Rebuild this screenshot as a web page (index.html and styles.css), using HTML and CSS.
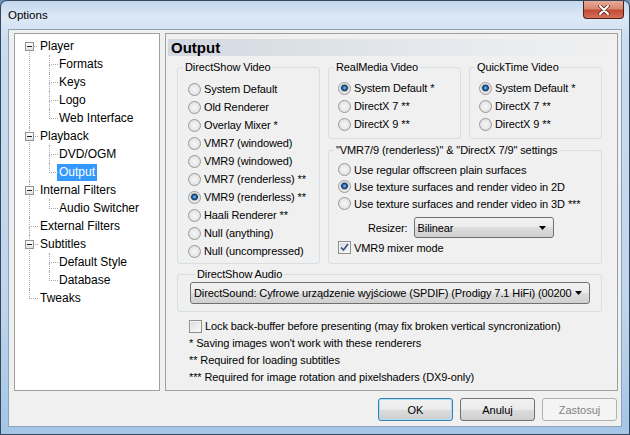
FILE: index.html
```html
<!DOCTYPE html>
<html lang="en">
<head>
    <meta charset="UTF-8">
    <title>Options</title>
    <link rel="stylesheet" href="styles.css">
</head>
<body>
    <div class="window">
        <div class="titlebar">
            <span class="title">Options</span>
            <div class="close">
                <svg width="12" height="10" viewBox="0 0 12 10">
                    <path d="M2 1 L10 9 M10 1 L2 9" stroke="#5a2a22" stroke-width="3.6" stroke-linecap="round"/>
                    <path d="M2 1 L10 9 M10 1 L2 9" stroke="#fff" stroke-width="2" stroke-linecap="round"/>
                </svg>
            </div>
        </div>
        <div class="client">
            <div class="main">
                <div class="tree">
                    <ul class="nodes">
                        <li><div class="row"><span class="exp"></span><span class="label">Player</span></div>
                            <ul>
                                <li><div class="row"><span class="label">Formats</span></div></li>
                                <li><div class="row"><span class="label">Keys</span></div></li>
                                <li><div class="row"><span class="label">Logo</span></div></li>
                                <li><div class="row"><span class="label">Web Interface</span></div></li>
                            </ul>
                        </li>
                        <li><div class="row"><span class="exp"></span><span class="label">Playback</span></div>
                            <ul>
                                <li><div class="row"><span class="label">DVD/OGM</span></div></li>
                                <li><div class="row"><span class="label sel">Output</span></div></li>
                            </ul>
                        </li>
                        <li><div class="row"><span class="exp"></span><span class="label">Internal Filters</span></div>
                            <ul>
                                <li><div class="row"><span class="label">Audio Switcher</span></div></li>
                            </ul>
                        </li>
                        <li><div class="row"><span class="label">External Filters</span></div></li>
                        <li><div class="row"><span class="exp"></span><span class="label">Subtitles</span></div>
                            <ul>
                                <li><div class="row"><span class="label">Default Style</span></div></li>
                                <li><div class="row"><span class="label">Database</span></div></li>
                            </ul>
                        </li>
                        <li><div class="row"><span class="label">Tweaks</span></div></li>
                    </ul>
                </div>

                <div class="panel">
                    <div class="header">Output</div>
                    <div class="content">
                        <div class="columns">
                            <fieldset class="group video">
                                <legend>DirectShow Video</legend>
                                <div class="items">
                                    <div class="opt"><span class="radio"></span>System Default</div>
                                    <div class="opt"><span class="radio"></span>Old Renderer</div>
                                    <div class="opt"><span class="radio"></span>Overlay Mixer *</div>
                                    <div class="opt"><span class="radio"></span>VMR7 (windowed)</div>
                                    <div class="opt"><span class="radio"></span>VMR9 (windowed)</div>
                                    <div class="opt"><span class="radio"></span>VMR7 (renderless) **</div>
                                    <div class="opt"><span class="radio on"></span>VMR9 (renderless) **</div>
                                    <div class="opt"><span class="radio"></span>Haali Renderer **</div>
                                    <div class="opt"><span class="radio"></span>Null (anything)</div>
                                    <div class="opt"><span class="radio"></span>Null (uncompressed)</div>
                                </div>
                            </fieldset>

                            <div class="right-col">
                                <div class="pair">
                                    <fieldset class="group small">
                                        <legend>RealMedia Video</legend>
                                        <div class="items">
                                            <div class="opt"><span class="radio on"></span>System Default *</div>
                                            <div class="opt"><span class="radio"></span>DirectX 7 **</div>
                                            <div class="opt"><span class="radio"></span>DirectX 9 **</div>
                                        </div>
                                    </fieldset>
                                    <fieldset class="group small">
                                        <legend>QuickTime Video</legend>
                                        <div class="items">
                                            <div class="opt"><span class="radio on"></span>System Default *</div>
                                            <div class="opt"><span class="radio"></span>DirectX 7 **</div>
                                            <div class="opt"><span class="radio"></span>DirectX 9 **</div>
                                        </div>
                                    </fieldset>
                                </div>
                                <fieldset class="group vmr">
                                    <legend>"VMR7/9 (renderless)" &amp; "DirectX 7/9" settings</legend>
                                    <div class="items">
                                        <div class="opt"><span class="radio"></span>Use regular offscreen plain surfaces</div>
                                        <div class="opt"><span class="radio on"></span>Use texture surfaces and render video in 2D</div>
                                        <div class="opt"><span class="radio"></span>Use texture surfaces and render video in 3D ***</div>
                                        <div class="resizer">
                                            <span>Resizer:</span>
                                            <div class="combo short">
                                                <span class="value">Bilinear</span>
                                                <svg width="7" height="4" viewBox="0 0 7 4"><polygon points="0,0 7,0 3.5,4" fill="#000"/></svg>
                                            </div>
                                        </div>
                                        <div class="opt check-row"><span class="check on"><svg width="11" height="11" viewBox="0 0 11 11"><path d="M2 5.5 L4.5 8 L9 2" fill="none" stroke="#3d4f8c" stroke-width="1.7"/></svg></span>VMR9 mixer mode</div>
                                    </div>
                                </fieldset>
                            </div>
                        </div>

                        <fieldset class="group audio">
                            <legend>DirectShow Audio</legend>
                            <div class="combo wide">
                                <span class="value">DirectSound: Cyfrowe urządzenie wyjściowe (SPDIF) (Prodigy 7.1 HiFi) (00200</span>
                                <svg width="7" height="4" viewBox="0 0 7 4"><polygon points="0,0 7,0 3.5,4" fill="#000"/></svg>
                            </div>
                        </fieldset>

                        <div class="notes">
                            <div class="opt"><span class="check"></span>Lock back-buffer before presenting (may fix broken vertical syncronization)</div>
                            <div class="note">* Saving images won't work with these renderers</div>
                            <div class="note">** Required for loading subtitles</div>
                            <div class="note">*** Required for image rotation and pixelshaders (DX9-only)</div>
                        </div>
                    </div>
                </div>
            </div>

            <div class="buttons">
                <div class="btn default">OK</div>
                <div class="btn">Anuluj</div>
                <div class="btn disabled">Zastosuj</div>
            </div>
        </div>
    </div>
</body>
</html>
```

FILE: styles.css
```css
body {
    margin: 0;
    width: 630px;
    height: 435px;
    overflow: hidden;
    font-family: "Liberation Sans", Arial, sans-serif;
    font-size: 12px;
    color: #000;
    background: #6b8fb5;
}

.window {
    width: 630px;
    height: 435px;
    box-sizing: border-box;
    border: 1px solid #34475c;
    border-radius: 7px 7px 0 0;
    background: linear-gradient(to bottom, #c3d7ec 0, #dde9f6 16px, #cadcef 40px, #bfd5eb 70%, #a4c5e6 100%);
}

.titlebar {
    height: 28px;
    display: flex;
    align-items: center;
    padding-left: 7px;
}

.title {
    font-size: 11.5px;
    color: #000;
}

.close {
    align-self: flex-start;
    margin-left: auto;
    margin-right: 5px;
    width: 41px;
    height: 18px;
    box-sizing: border-box;
    border: 1px solid #4d221b;
    border-top: none;
    border-radius: 0 0 4px 4px;
    background: linear-gradient(to bottom, #e8aa9a 0, #d98770 45%, #c34b33 55%, #d4705a 100%);
    display: flex;
    justify-content: center;
    align-items: center;
}

.client {
    margin: 0 7px;
    height: 398px;
    box-sizing: border-box;
    border: 1px solid #8ca2b9;
    background: #f0f0f0;
}

.main {
    display: flex;
    margin: 3px 0 0 5px;
}

/* tree */

.tree {
    width: 146px;
    height: 358px;
    box-sizing: border-box;
    border: 1px solid #a0a0a0;
    background: #fff;
}

.nodes,
.nodes ul {
    list-style: none;
    margin: 0;
    padding: 0;
}

.nodes {
    padding: 3px 0 0 14px;
}

.nodes ul {
    padding-left: 20px;
}

.nodes li {
    position: relative;
}

.nodes li::before {
    content: '';
    position: absolute;
    left: 0;
    top: 0;
    width: 8px;
    height: 9px;
    border-left: 1px dotted #a8a8a8;
    border-bottom: 1px dotted #a8a8a8;
}

.nodes li::after {
    content: '';
    position: absolute;
    left: 0;
    top: 10px;
    bottom: 0;
    border-left: 1px dotted #a8a8a8;
}

.nodes li:last-child::after {
    display: none;
}

.nodes > li:first-child::before {
    border-left: none;
}

.row {
    height: 18px;
    display: flex;
    align-items: center;
    white-space: nowrap;
}

.nodes > li > .row {
    padding-left: 9px;
}

.nodes ul .row {
    padding-left: 8px;
}

.label {
    padding: 0 2px;
    line-height: 17px;
}

.label.sel {
    background: #3399ff;
    color: #fff;
}

.exp {
    position: absolute;
    left: -4px;
    top: 5px;
    width: 9px;
    height: 9px;
    box-sizing: border-box;
    border: 1px solid #919191;
    background: linear-gradient(#222, #222) center / 5px 1px no-repeat, linear-gradient(#fff, #e2e2e2);
    z-index: 1;
}

/* right panel */

.panel {
    width: 453px;
    height: 358px;
    box-sizing: border-box;
    border: 1px solid #a0a0a0;
    padding: 5px 1px 0;
    margin-left: 5px;
}

.header {
    height: 17px;
    margin: 0 1px;
    padding-left: 3px;
    font-size: 15px;
    font-weight: bold;
    line-height: 17px;
    background: linear-gradient(to right, #d2d8e0 0, #e4e8ed 55%, #f0f0f0 100%);
}

.content {
    padding: 0 14px 0 10px;
    font-size: 11px;
    letter-spacing: -0.1px;
}

.columns {
    display: flex;
    gap: 8px;
    margin-top: 3px;
}

.group {
    margin: 0;
    padding: 0;
    min-width: 0;
    border: 1px solid #d5dfe5;
    border-radius: 3px;
    box-sizing: border-box;
}

.group legend {
    margin-left: 5px;
    padding: 0 2px;
    line-height: 16px;
}

.video {
    width: 143px;
}

.video .items {
    padding: 5px 0 3px 10px;
}

.right-col {
    width: 274px;
    display: flex;
    flex-direction: column;
}

.pair {
    display: flex;
    gap: 8px;
}

.small {
    width: 133px;
}

.small .items {
    padding: 4px 0 5px 9px;
}

.opt {
    height: 18px;
    display: flex;
    align-items: center;
    white-space: nowrap;
}

.vmr {
    flex: 1;
    margin-top: 3px;
}

.vmr .items {
    padding: 3px 0 0 9px;
}

.vmr .opt {
    height: 17px;
}

.radio {
    width: 13px;
    height: 13px;
    box-sizing: border-box;
    border: 1px solid #9a9a9a;
    border-radius: 50%;
    margin-right: 3px;
    flex-shrink: 0;
    background: radial-gradient(circle at 50% 50%, #f6f6f6 0, #e8e8e8 55%, #cdcdcd 100%);
}

.radio.on {
    background: radial-gradient(circle at 50% 45%, #9fd2f5 0, #2f73b5 1.5px, #0f3563 3px, #b8b8b8 3.6px, #ececec 4.6px, #d2d2d2 100%);
}

.check {
    width: 13px;
    height: 13px;
    box-sizing: border-box;
    border: 1px solid #8e8f8f;
    margin-right: 3px;
    flex-shrink: 0;
    background: linear-gradient(135deg, #d8d8d8, #fbfbfb);
    box-shadow: inset 0 0 0 1px #f4f4f4;
}

.check svg {
    display: block;
}

.check-row {
    margin-top: 1px;
}

.resizer {
    display: flex;
    align-items: center;
    gap: 6px;
    margin: 5px 0 0 30px;
}

.combo {
    height: 21px;
    box-sizing: border-box;
    border: 1px solid #707070;
    border-radius: 3px;
    background: linear-gradient(to bottom, #f3f3f3 0, #ebebeb 50%, #dddddd 50%, #d0d0d0 100%);
    display: flex;
    align-items: center;
    padding: 0 7px 0 3px;
}

.combo .value {
    flex: 1;
    overflow: hidden;
    white-space: nowrap;
}

.combo.short {
    width: 140px;
}

.audio {
    margin-top: 2px;
    width: 425px;
    padding: 0 11px 7px 12px;
}

.combo.wide {
    height: 22px;
}

.notes {
    margin: 6px 0 0 12px;
}

.notes .opt,
.note {
    height: 17px;
    line-height: 17px;
}

/* dialog buttons */

.buttons {
    display: flex;
    justify-content: flex-end;
    gap: 7px;
    margin: 7px 4px 0 0;
    font-size: 11px;
}

.btn {
    width: 75px;
    height: 23px;
    box-sizing: border-box;
    border: 1px solid #707070;
    border-radius: 3px;
    background: linear-gradient(to bottom, #f2f2f2 0, #ebebeb 50%, #dddddd 50%, #cfcfcf 100%);
    display: flex;
    justify-content: center;
    align-items: center;
}

.btn.default {
    border-color: #3c7fb1;
    box-shadow: inset 0 0 0 1px #a6e0f7;
}

.btn.disabled {
    border-color: #adb2b5;
    background: #f4f4f4;
    color: #838383;
}
```
